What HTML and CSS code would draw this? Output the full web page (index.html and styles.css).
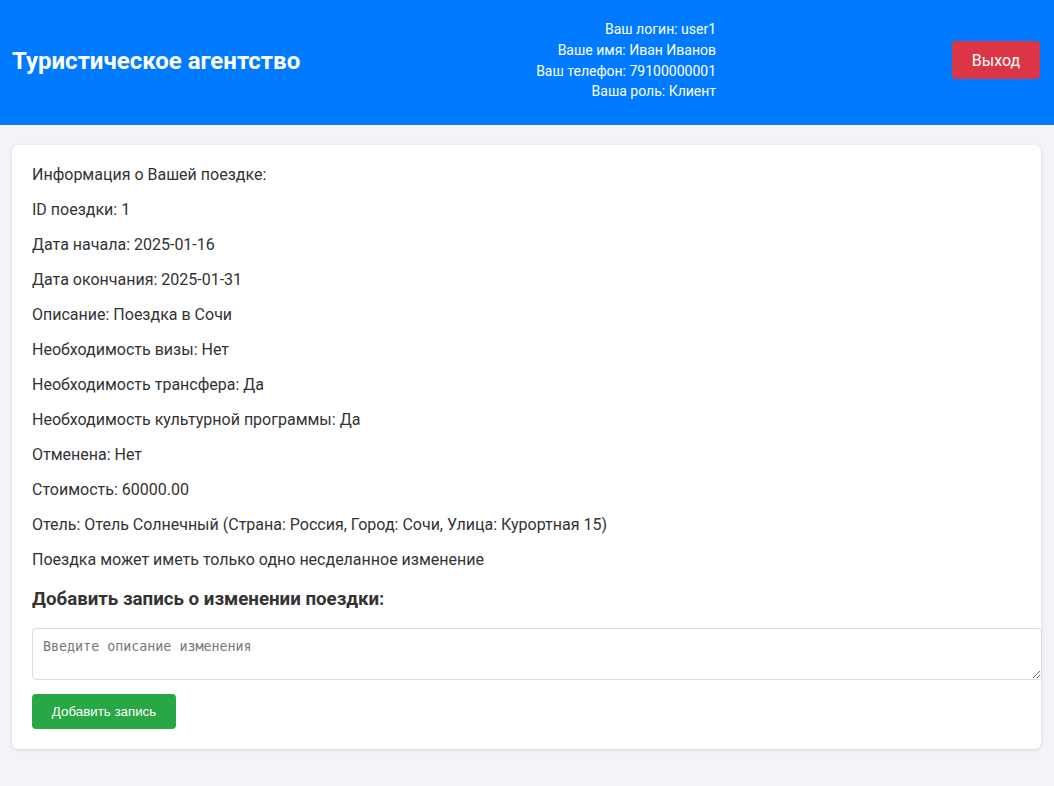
FILE: index.html
```html
<!DOCTYPE html>
<html lang="ru">
<head>
<meta charset="utf-8">
<title>Туристическое агентство</title>
<link rel="stylesheet" href="styles.css">
</head>
<body>
<header class="topbar">
  <h1 class="brand">Туристическое агентство</h1>
  <div class="user-info">
    <div class="user-line">Ваш логин: user1</div>
    <div class="user-line">Ваше имя: Иван Иванов</div>
    <div class="user-line">Ваш телефон: 79100000001</div>
    <div class="user-line">Ваша роль: Клиент</div>
  </div>
  <button class="btn-logout">Выход</button>
</header>
<main class="card">
  <p class="info">Информация о Вашей поездке:</p>
  <p class="info">ID поездки: 1</p>
  <p class="info">Дата начала: 2025-01-16</p>
  <p class="info">Дата окончания: 2025-01-31</p>
  <p class="info">Описание: Поездка в Сочи</p>
  <p class="info">Необходимость визы: Нет</p>
  <p class="info">Необходимость трансфера: Да</p>
  <p class="info">Необходимость культурной программы: Да</p>
  <p class="info">Отменена: Нет</p>
  <p class="info">Стоимость: 60000.00</p>
  <p class="info">Отель: Отель Солнечный (Страна: Россия, Город: Сочи, Улица: Курортная 15)</p>
  <p class="info">Поездка может иметь только одно несделанное изменение</p>
  <h3 class="section-title">Добавить запись о изменении поездки:</h3>
  <textarea class="change-input" placeholder="Введите описание изменения"></textarea>
  <button class="btn-add">Добавить запись</button>
</main>
</body>
</html>
```

FILE: styles.css
```css
html, body {
  margin: 0;
  padding: 0;
}
body {
  background: #f4f4f8;
  font-family: Roboto, "Noto Sans", sans-serif;
  color: #333;
  min-height: 786px;
}
.topbar {
  background: #007bff;
  color: #fff;
  height: 125px;
  display: flex;
  align-items: center;
  justify-content: space-between;
  padding: 0 14px 0 12px;
  box-sizing: border-box;
}
.brand {
  margin: -4px 0 0;
  font-size: 24px;
  font-weight: 700;
  line-height: 28px;
}
.user-info {
  text-align: right;
  font-size: 14px;
  line-height: 20.67px;
  margin-top: -4px;
}
.btn-logout {
  background: #dc3545;
  color: #fff;
  border: none;
  border-radius: 4px;
  font-family: Roboto, sans-serif;
  font-size: 16px;
  width: 88px;
  height: 38px;
  margin-top: -5px;
  padding: 0;
}
.card {
  display: block;
  background: #fff;
  margin: 20px 13px 0 12px;
  padding: 20px;
  border-radius: 6px;
  box-shadow: 0 1px 4px rgba(0,0,0,0.12);
}
.info {
  margin: 0 0 16px;
  font-size: 16px;
  line-height: 19px;
}
.info:last-of-type {
  margin-bottom: 0;
}
.section-title {
  margin: 19px 0 18px;
  font-size: 18.72px;
  line-height: 22px;
  font-weight: 700;
}
.change-input {
  display: block;
  width: calc(100% - 1px);
  height: 30px;
  padding: 10px;
  border: 1px solid #ddd;
  border-radius: 4px;
  font-family: "DejaVu Sans Mono", monospace;
  font-size: 13.33px;
  margin: 0 0 14px;
  box-sizing: content-box;
}
.change-input::placeholder {
  color: #777;
}
.btn-add {
  display: block;
  background: #28a745;
  color: #fff;
  border: none;
  border-radius: 4px;
  font-family: "Liberation Sans", Arial, sans-serif;
  font-size: 13.33px;
  width: 144px;
  height: 35px;
  padding: 0;
}
```
